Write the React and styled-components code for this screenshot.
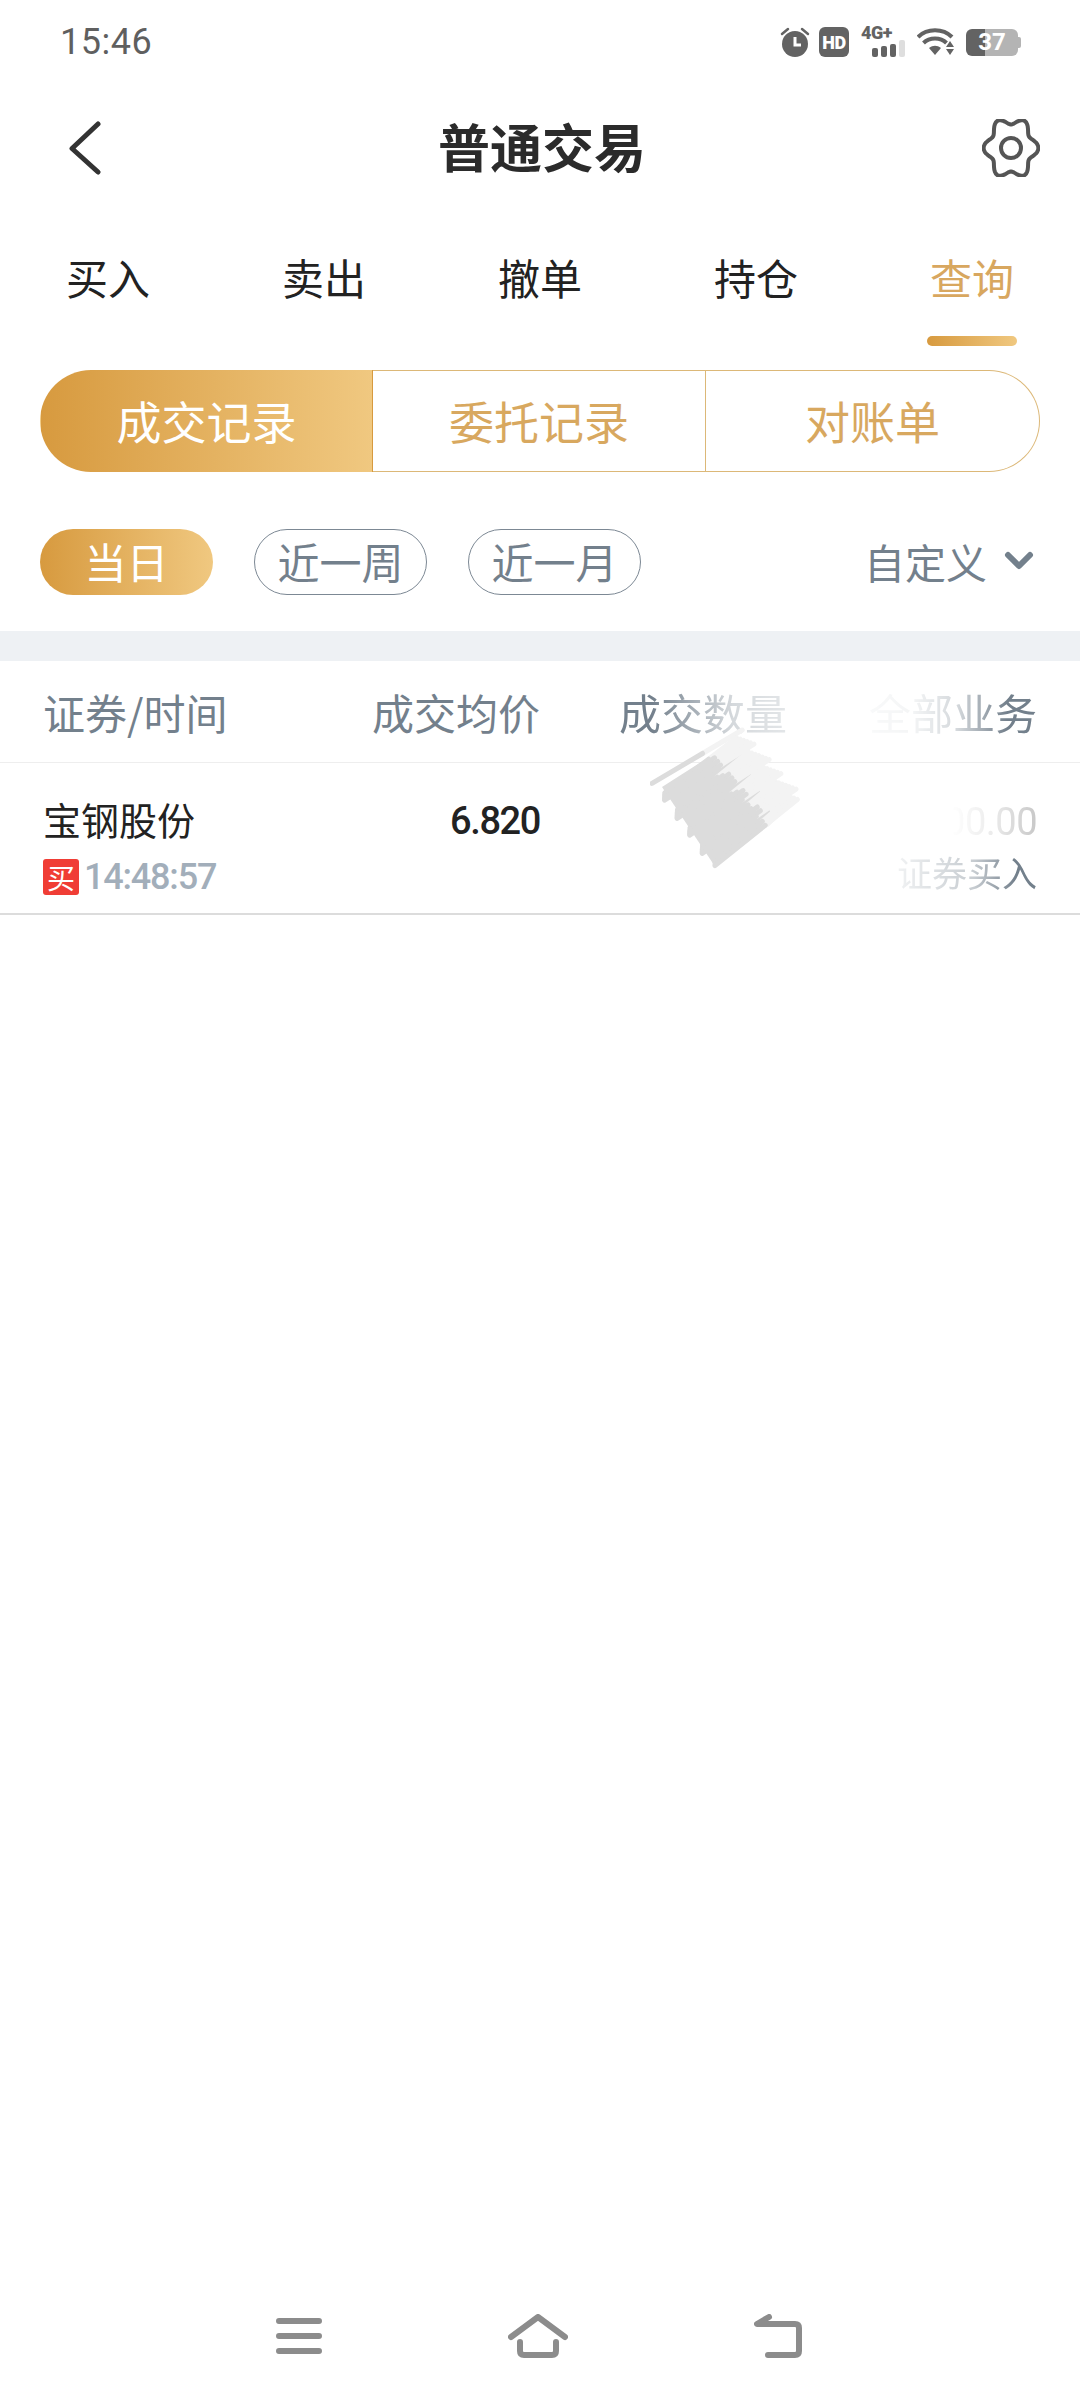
import React from "react"
import styled, { createGlobalStyle } from "styled-components"

const GOLD = "linear-gradient(90deg, #d79a3f 0%, #f0c880 100%)"

const GlobalStyle = createGlobalStyle`
  html, body {
    margin: 0;
    padding: 0;
    background: #ffffff;
  }

  body {
    font-family: "Noto Sans CJK SC", "Noto Sans", sans-serif;
  }
`

const gearPath = () => {
  const points = []
  for (let i = 0; i < 96; i++) {
    const a = (i / 96) * Math.PI * 2
    const r = 24 + 3.4 * Math.cos(6 * a)
    points.push(`${(29 + r * Math.cos(a)).toFixed(2)} ${(29 + 1.14 * r * Math.sin(a)).toFixed(2)}`)
  }
  return `M${points.join("L")}Z`
}

// the pencil-out over the quantity column
const scribbleStrokes = () => {
  const strokes = []
  const count = 30
  for (let i = 0; i < count; i++) {
    const u = i / (count - 1)
    const wobble = ((i * 37) % 13) - 6
    const x1 = 8 + 56 * u + wobble
    const y1 = 60 + 78 * u + wobble * 0.6
    const x2 = 88 + 60 * u - wobble * 0.7
    const y2 = 6 + 66 * u + wobble * 0.5
    const split = 0.56 + ((i * 17) % 7) / 60
    const mx = x1 + (x2 - x1) * split
    const my = y1 + (y2 - y1) * split
    strokes.push({ id: i, x1, y1, x2, y2, mx, my })
  }
  return strokes
}

const Page = styled.div`
  display: flex;
  flex-direction: column;
  width: 1080px;
  height: 2400px;
  overflow: hidden;
  background: #ffffff;
`

const StatusBar = styled.div`
  display: flex;
  align-items: center;
  justify-content: space-between;
  height: 84px;
  padding: 0 62px 0 60px;
`

const Clock = styled.span`
  font-family: Roboto, sans-serif;
  font-size: 36px;
  line-height: 1;
  letter-spacing: 0.5px;
  color: #5f5f5f;
`

const StatusIcons = styled.div`
  display: flex;
  align-items: center;
  gap: 9px;
`

const HdBadge = styled.span`
  display: flex;
  align-items: center;
  justify-content: center;
  width: 30px;
  height: 30px;
  border-radius: 6px;
  background: #636363;
  color: #ffffff;
  font-family: Roboto, sans-serif;
  font-size: 18px;
  font-weight: 900;
  letter-spacing: -0.5px;
`

const NetworkIcon = styled.div`
  position: relative;
  width: 44px;
  height: 30px;
  margin: 0 3px;
`

const NetworkLabel = styled.span`
  position: absolute;
  top: -3px;
  left: 0;
  font-family: Roboto, sans-serif;
  font-size: 18px;
  line-height: 18px;
  font-weight: 900;
  letter-spacing: -0.5px;
  color: #636363;
`

const SignalBars = styled.div`
  position: absolute;
  right: 0;
  bottom: 0;
  display: flex;
  align-items: flex-end;
  gap: 3px;
`

const SignalBar = styled.i`
  display: block;
  width: 6px;
  height: ${(p) => p.$h}px;
  border-radius: 2px;
  background: ${(p) => (p.$off ? "#dedede" : "#636363")};
`

const Battery = styled.div`
  position: relative;
  display: flex;
  align-items: center;
  justify-content: center;
  width: 52px;
  height: 27px;
  margin-left: 2px;
  border-radius: 6px;
  background: linear-gradient(90deg, #636363 0 37%, #b4b4b4 37% 100%);
  color: #ffffff;
  font-family: Roboto, sans-serif;
  font-size: 24px;
  font-weight: 700;

  &::after {
    content: "";
    position: absolute;
    top: 8px;
    right: -3px;
    width: 3px;
    height: 11px;
    border-radius: 0 2px 2px 0;
    background: #b4b4b4;
  }
`

const NavBar = styled.div`
  display: flex;
  align-items: center;
  justify-content: space-between;
  height: 128px;
  padding: 0 40px 0 68px;
`

const Title = styled.h1`
  margin: 0 0 4px;
  font-size: 52px;
  line-height: 1;
  font-weight: 700;
  color: #2b2b2b;
`

const Tabs = styled.div`
  display: grid;
  grid-template-columns: repeat(5, 216px);
  margin-top: 37px;
`

const Tab = styled.div`
  display: flex;
  flex-direction: column;
  align-items: center;
  font-size: 42px;
  line-height: 56px;
  color: ${(p) => (p.$active ? "#d8a75f" : "#222222")};

  &::after {
    content: "";
    width: 90px;
    height: 10px;
    margin-top: 31px;
    border-radius: 5px;
    background: ${(p) => (p.$active ? GOLD : "transparent")};
  }
`

const Segments = styled.div`
  display: grid;
  grid-template-columns: 333px 333px 334px;
  height: 102px;
  margin: 24px 40px 0;
`

const Segment = styled.div`
  display: flex;
  align-items: center;
  justify-content: center;
  box-sizing: border-box;
  padding-bottom: 2px;
  border: 1.5px solid #dcb878;
  border-left-width: ${(p) => (p.$first ? "1.5px" : "0")};
  border-radius: ${(p) => (p.$first ? "51px 0 0 51px" : p.$last ? "0 51px 51px 0" : "0")};
  background: ${(p) => (p.$active ? GOLD : "#ffffff")};
  border-color: ${(p) => (p.$active ? "transparent" : "#dcb878")};
  color: ${(p) => (p.$active ? "#ffffff" : "#d8a85f")};
  font-size: 45px;
`

const Filters = styled.div`
  display: flex;
  align-items: center;
  gap: 41px;
  height: 66px;
  margin-top: 57px;
  padding: 0 45px 0 40px;
`

const FilterPill = styled.div`
  display: flex;
  align-items: center;
  justify-content: center;
  box-sizing: border-box;
  width: 173px;
  height: 66px;
  padding-bottom: 3px;
  border-radius: 33px;
  border: ${(p) => (p.$active ? "none" : "1.5px solid #7c8894")};
  background: ${(p) => (p.$active ? GOLD : "#ffffff")};
  color: ${(p) => (p.$active ? "#ffffff" : "#73808c")};
  font-size: 42px;
`

const CustomRange = styled.div`
  display: flex;
  align-items: center;
  gap: 16px;
  margin-left: auto;
  padding-bottom: 3px;
  color: #73808c;
  font-size: 41px;
`

const Band = styled.div`
  height: 30px;
  margin-top: 36px;
  background: #eef1f4;
`

const TableRow = styled.div`
  position: relative;
  display: grid;
  grid-template-columns: 250px 247px 247px 250px;
  box-sizing: border-box;
  height: ${(p) => p.$h}px;
  padding: 0 43px;
  align-items: center;
  border-bottom: ${(p) => p.$line};
`

const HeadCell = styled.div`
  color: #73808c;
  font-size: 42px;
  white-space: nowrap;
  text-align: ${(p) => (p.$left ? "left" : "right")};
  ${(p) => p.$fade && `mask-image: ${p.$fade}; -webkit-mask-image: ${p.$fade};`}
`

const NameCell = styled.div`
  display: flex;
  flex-direction: column;
  gap: 12px;
  padding-top: 16px;
`

const StockName = styled.span`
  font-size: 38px;
  line-height: 50px;
  color: #222222;
`

const TimeLine = styled.div`
  display: flex;
  align-items: center;
  gap: 5px;
`

const SideBadge = styled.span`
  display: flex;
  align-items: center;
  justify-content: center;
  width: 36px;
  height: 36px;
  border-radius: 3px;
  background: #f03d35;
  color: #ffffff;
  font-size: 28px;
`

const TradeTime = styled.span`
  font-family: Roboto, sans-serif;
  font-size: 36px;
  font-weight: 500;
  letter-spacing: -1.2px;
  color: #a2aeba;
`

const Price = styled.div`
  align-self: start;
  margin-top: 35px;
  font-family: Roboto, sans-serif;
  font-size: 38px;
  line-height: 46px;
  font-weight: 500;
  letter-spacing: -1.4px;
  text-align: right;
  color: #222222;
`

const AmountCell = styled.div`
  display: flex;
  flex-direction: column;
  align-items: flex-end;
  gap: 3px;
  padding-top: 15px;
`

const Amount = styled.span`
  font-family: Roboto, sans-serif;
  font-size: 38px;
  line-height: 50px;
  letter-spacing: -0.5px;
  color: #c8c8c8;
  mask-image: linear-gradient(90deg, transparent 25%, rgba(0, 0, 0, 0.35) 60%, #000 100%);
  -webkit-mask-image: linear-gradient(90deg, transparent 25%, rgba(0, 0, 0, 0.35) 60%, #000 100%);
`

const BusinessType = styled.span`
  font-size: 35px;
  line-height: 44px;
  color: #73808c;
  mask-image: linear-gradient(90deg, rgba(0, 0, 0, 0.1) 0%, rgba(0, 0, 0, 0.4) 55%, #000 85%);
  -webkit-mask-image: linear-gradient(90deg, rgba(0, 0, 0, 0.1) 0%, rgba(0, 0, 0, 0.4) 55%, #000 85%);
`

const Scribble = styled.svg`
  position: absolute;
  left: 650px;
  top: -36px;
`

const SoftKeys = styled.div`
  display: flex;
  align-items: center;
  justify-content: center;
  gap: 186px;
  margin-top: auto;
  padding-bottom: 42px;
`

const HeaderLine = "1.5px solid #eeeeee"
const RowLine = "2px solid #dcdcdc"

const QTY_FADE = "linear-gradient(90deg, #000 45%, rgba(0,0,0,0.3) 78%, rgba(0,0,0,0.2) 100%)"
const BIZ_FADE = "linear-gradient(90deg, rgba(0,0,0,0.02) 20%, rgba(0,0,0,0.08) 50%, rgba(0,0,0,0.3) 68%, #000 88%)"

const tabs = ["买入", "卖出", "撤单", "持仓", "查询"]
const segments = ["成交记录", "委托记录", "对账单"]

const AlarmIcon = () => (
  <svg width="30" height="30" viewBox="0 0 30 30">
    <circle cx="15" cy="17" r="13" fill="#636363" />
    <path d="M15 10v8h6" fill="none" stroke="#fff" strokeWidth="3" />
    <path d="M2 7l6-5M28 7l-6-5" stroke="#636363" strokeWidth="2.5" strokeLinecap="round" />
  </svg>
)

const WifiIcon = () => (
  <svg width="38" height="28" viewBox="0 0 38 28">
    <g fill="none" stroke="#636363" strokeWidth="4">
      <path d="M1 9C10 0 26 0 35 9" />
      <path d="M6.5 15c6-6 17-6 23 0" />
    </g>
    <path d="M12 20c4-3 8-3 12 0l-6 7z" fill="#636363" />
    <path d="M33 13l4 6h-8z" fill="#636363" />
    <path d="M33 27l4-6h-8z" fill="#636363" />
  </svg>
)

const BackIcon = () => (
  <svg width="34" height="54" viewBox="0 0 34 54">
    <path d="M30 3L4 27.5 30 51" fill="none" stroke="#333333" strokeWidth="5" strokeLinecap="round" strokeLinejoin="round" />
  </svg>
)

const GearIcon = () => (
  <svg width="58" height="58" viewBox="0 0 58 58">
    <path d={gearPath()} fill="none" stroke="#555555" strokeWidth="4" strokeLinejoin="round" />
    <circle cx="29" cy="29" r="10" fill="none" stroke="#555555" strokeWidth="4" />
  </svg>
)

const ChevronIcon = () => (
  <svg width="32" height="22" viewBox="0 0 32 22">
    <path d="M5 5l11 11L27 5" fill="none" stroke="#73808c" strokeWidth="6" strokeLinecap="round" strokeLinejoin="round" />
  </svg>
)

const MenuKey = () => (
  <svg width="46" height="36" viewBox="0 0 46 36">
    <path d="M3 3h40M3 18h40M3 33h40" stroke="#8c8c8c" strokeWidth="6" strokeLinecap="round" />
  </svg>
)

const HomeKey = () => (
  <svg width="60" height="44" viewBox="0 0 60 44">
    <g fill="none" stroke="#8c8c8c" strokeWidth="6" strokeLinecap="round" strokeLinejoin="round">
      <path d="M3 23L30 3l27 20" />
      <path d="M12 28v9q0 4 4 4h28q4 0 4-4v-9" />
    </g>
  </svg>
)

const ReturnKey = () => (
  <svg width="50" height="44" viewBox="0 0 50 44">
    <g fill="none" stroke="#8c8c8c" strokeWidth="6" strokeLinecap="round" strokeLinejoin="round">
      <path d="M15 3L3 10h38q4 0 4 4v23q0 4-4 4H14" />
    </g>
  </svg>
)

const App = () => {
  const strokes = scribbleStrokes()

  return (
    <Page>
      <GlobalStyle />

      <StatusBar>
        <Clock>15:46</Clock>
        <StatusIcons>
          <AlarmIcon />
          <HdBadge>HD</HdBadge>
          <NetworkIcon>
            <NetworkLabel>4G+</NetworkLabel>
            <SignalBars>
              <SignalBar $h={9} />
              <SignalBar $h={11} />
              <SignalBar $h={13} />
              <SignalBar $h={17} $off />
            </SignalBars>
          </NetworkIcon>
          <WifiIcon />
          <Battery>37</Battery>
        </StatusIcons>
      </StatusBar>

      <NavBar>
        <BackIcon />
        <Title>普通交易</Title>
        <GearIcon />
      </NavBar>

      <Tabs>
        {tabs.map((tab, i) => (
          <Tab key={tab} $active={i === 4}>
            {tab}
          </Tab>
        ))}
      </Tabs>

      <Segments>
        {segments.map((label, i) => (
          <Segment key={label} $active={i === 0} $first={i === 0} $last={i === 2}>
            {label}
          </Segment>
        ))}
      </Segments>

      <Filters>
        <FilterPill $active>当日</FilterPill>
        <FilterPill>近一周</FilterPill>
        <FilterPill>近一月</FilterPill>
        <CustomRange>
          自定义
          <ChevronIcon />
        </CustomRange>
      </Filters>

      <Band />

      <TableRow $h={102} $line={HeaderLine}>
        <HeadCell $left>证券/时间</HeadCell>
        <HeadCell>成交均价</HeadCell>
        <HeadCell $fade={QTY_FADE}>成交数量</HeadCell>
        <HeadCell $fade={BIZ_FADE}>全部业务</HeadCell>
      </TableRow>

      <TableRow $h={152} $line={RowLine}>
        <NameCell>
          <StockName>宝钢股份</StockName>
          <TimeLine>
            <SideBadge>买</SideBadge>
            <TradeTime>14:48:57</TradeTime>
          </TimeLine>
        </NameCell>
        <Price>6.820</Price>
        <div />
        <AmountCell>
          <Amount>100.00</Amount>
          <BusinessType>证券买入</BusinessType>
        </AmountCell>
        <Scribble width="156" height="150" viewBox="0 0 156 150">
          <path d="M84 14L146 74L118 100L62 28Z" fill="#f3f3f3" />
          <path d="M12 60L84 14L124 92L64 138Z" fill="#dcdcdc" />
          {strokes.map((s) => (
            <path key={`light-${s.id}`} d={`M${s.mx} ${s.my}L${s.x2} ${s.y2}`} fill="none" strokeWidth="5" strokeLinecap="round" stroke="#f3f3f3" />
          ))}
          {strokes.map((s) => (
            <path key={`dark-${s.id}`} d={`M${s.x1} ${s.y1}L${s.mx} ${s.my}`} fill="none" strokeWidth="5" strokeLinecap="round" stroke="#dcdcdc" />
          ))}
        </Scribble>
      </TableRow>

      <SoftKeys>
        <MenuKey />
        <HomeKey />
        <ReturnKey />
      </SoftKeys>
    </Page>
  )
}

export default App
